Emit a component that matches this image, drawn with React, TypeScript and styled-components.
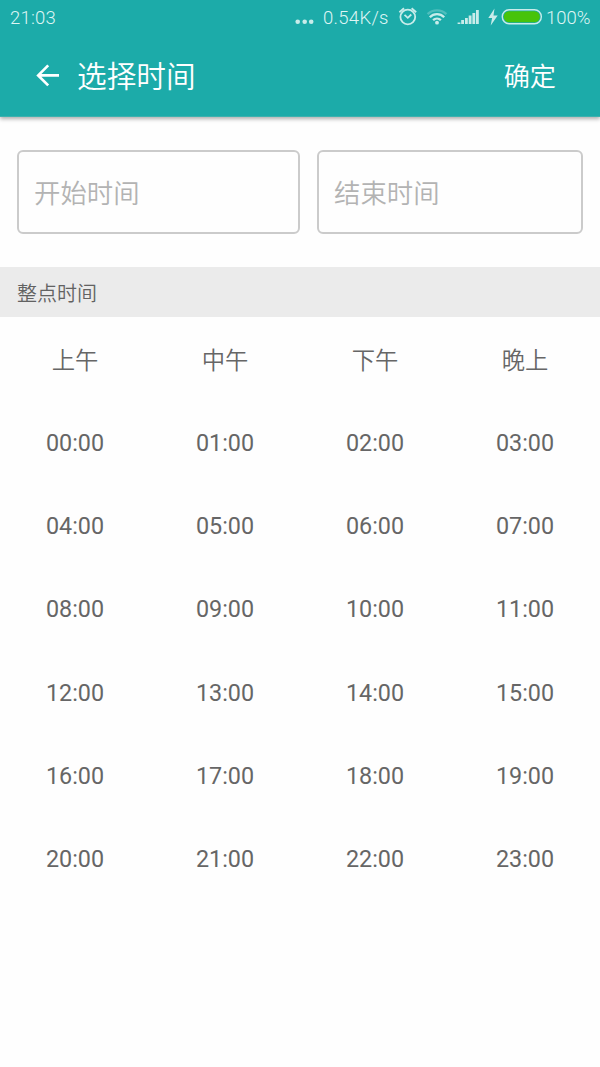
import React from "react";
import styled, { createGlobalStyle } from "styled-components";

const GlobalStyle = createGlobalStyle`
  * { box-sizing: border-box; }
  body {
    margin: 0;
    background: #fefefe;
    font-family: Roboto, "Noto Sans CJK SC", sans-serif;
  }
`;

const Screen = styled.div`
  display: flex;
  flex-direction: column;
  width: 600px;
  height: 1067px;
  overflow: hidden;
  background: #fefefe;
`;

const Header = styled.header`
  flex: none;
  height: 117px;
  background: #1caba9;
  border-bottom: 1px solid #3db1ae;
  box-shadow: 0 2px 4px rgba(0, 0, 0, 0.32);
`;

const StatusBar = styled.div`
  display: flex;
  align-items: center;
  height: 35px;
  padding: 0 10px;
  color: #c8ecea;
`;

const StatusText = styled.span<{ $width: number; $spacing?: number }>`
  width: ${(p) => p.$width}px;
  color: #def5f4;
  font-size: 18.5px;
  font-weight: 350;
  line-height: 35px;
  padding-top: 1px;
  letter-spacing: ${(p) => p.$spacing ?? 0}px;
  white-space: nowrap;
`;

const StatusIcons = styled.svg`
  display: block;
  flex: none;
`;

const StatusGroup = styled.div`
  display: flex;
  align-items: center;
  margin-left: auto;
`;

const ActionBar = styled.div`
  display: flex;
  align-items: center;
  height: 81px;
  padding: 0 44px 0 36px;
  color: #fff;
`;

const Title = styled.h1`
  margin: 0 auto 0 17px;
  padding-top: 2px;
  font-size: 29.7px;
  font-weight: 350;
  line-height: 40px;
`;

const Confirm = styled.button`
  padding: 2px 0 0;
  border: 0;
  background: none;
  color: #fff;
  font: inherit;
  font-size: 26.2px;
  font-weight: 350;
  line-height: 40px;
`;

const Fields = styled.div`
  display: flex;
  flex: none;
  gap: 17px;
  height: 150px;
  padding: 33px 17px;
`;

const Field = styled.div<{ $width: number }>`
  display: flex;
  align-items: center;
  width: ${(p) => p.$width}px;
  height: 84px;
  padding: 0 0 2px 15px;
  border: 2px solid #cbcbcb;
  border-radius: 6px;
  color: #b3b3b3;
  font-size: 26.4px;
  font-weight: 350;
`;

const SectionTitle = styled.h2`
  flex: none;
  height: 50px;
  margin: 0;
  padding-left: 17px;
  background: #ebebeb;
  color: #626262;
  font-size: 20px;
  font-weight: 350;
  line-height: 54px;
`;

const TimeGrid = styled.div`
  display: grid;
  grid-template-columns: repeat(4, 150px);
  grid-auto-rows: 83.33px;
`;

const Cell = styled.div`
  display: flex;
  align-items: center;
  justify-content: center;
  padding-top: 1.2px;
  color: #666;
  font-size: 23.33px;
`;

const PeriodCell = styled(Cell)`
  padding-top: 0;
  font-weight: 350;
`;

const periods = ["上午", "中午", "下午", "晚上"];
const hours = Array.from({ length: 24 }, (_, h) => `${String(h).padStart(2, "0")}:00`);

export default function App() {
  return (
    <>
      <GlobalStyle />
      <Screen>
        <Header>
          <StatusBar>
            <StatusText $width={60} $spacing={0.2}>21:03</StatusText>
            <StatusGroup>
              <StatusIcons width="28" height="35" viewBox="295 0 28 35" fill="currentColor">
                <circle cx="297.7" cy="21.8" r="2.3" />
                <circle cx="304.7" cy="21.8" r="2.3" />
                <circle cx="311.2" cy="21.8" r="2.3" />
              </StatusIcons>
              <StatusText $width={70} $spacing={0.3}>0.54K/s</StatusText>
              <StatusIcons width="153" height="35" viewBox="393 0 153 35" fill="none" stroke="currentColor">
                <circle cx="407.8" cy="17" r="7.4" strokeWidth="1.8" />
                <path d="M404.5 14.8l3.3 3 3.5-3.3M399.4 12.2l4.6-4M416.2 12.2l-4.6-4" strokeWidth="1.8" />
                <path d="M427.6 14.2a13.5 13.5 0 0 1 18.8 0" strokeWidth="2.4" opacity=".3" />
                <path d="M429.8 17.2a10 10 0 0 1 14.4 0M433.1 20.2a5.6 5.6 0 0 1 7.8 0" strokeWidth="2.3" />
                <circle cx="437" cy="22.7" r="1.9" fill="currentColor" stroke="none" />
                <path d="M459 24v-1.5M462.6 24v-4M466.4 24v-6M470.1 24v-8.5M473.8 24v-11M477.4 24v-14" strokeWidth="2.8" />
                <path d="M494.5 8.6l-6.2 9.4h3.8l-1.4 7.4 7-9.9h-4.2z" fill="currentColor" stroke="none" />
                <rect x="502.3" y="9.8" width="39" height="14" rx="6.8" strokeWidth="1.4" />
                <rect x="503.8" y="11.3" width="36" height="11" rx="5.3" fill="#47c30b" stroke="none" />
              </StatusIcons>
              <StatusText $width={44}>100%</StatusText>
            </StatusGroup>
          </StatusBar>
          <ActionBar>
            <svg width="24" height="24" viewBox="0 0 24 24" fill="none" stroke="#fff" strokeWidth="2.7">
              <path d="M23 11.4H2.5M12.2 1.4L2.2 11.4l10 10" />
            </svg>
            <Title>选择时间</Title>
            <Confirm>确定</Confirm>
          </ActionBar>
        </Header>
        <Fields>
          <Field $width={283}>开始时间</Field>
          <Field $width={266}>结束时间</Field>
        </Fields>
        <SectionTitle>整点时间</SectionTitle>
        <TimeGrid>
          {periods.map((p) => (
            <PeriodCell key={p}>{p}</PeriodCell>
          ))}
          {hours.map((h) => (
            <Cell key={h}>{h}</Cell>
          ))}
        </TimeGrid>
      </Screen>
    </>
  );
}
